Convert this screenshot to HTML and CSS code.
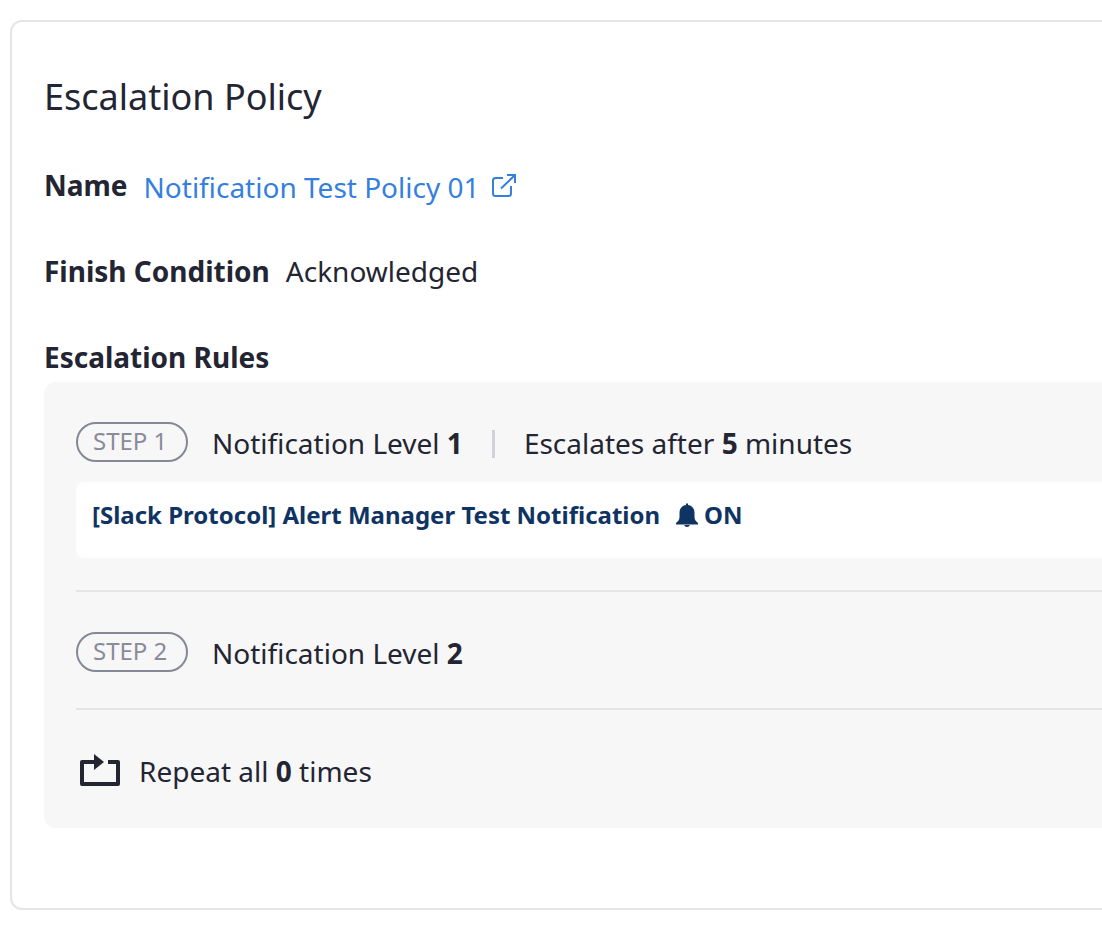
FILE: index.html
```html
<!DOCTYPE html>
<html lang="en">
<head>
<meta charset="utf-8">
<title>Escalation Policy</title>
<link rel="stylesheet" href="styles.css">
</head>
<body>
<main class="card">
  <h1 class="title">Escalation Policy</h1>
  <dl class="fields">
    <div class="field">
      <dt class="label">Name</dt>
      <dd class="value link-value"><a class="link" href="#">Notification Test Policy 01
        <svg class="external" viewBox="0 0 26 26" fill="none" stroke="currentColor" stroke-width="2" aria-hidden="true"><path d="M12 5H4.500Q2 5 2 7.500V20.500Q2 23 4.500 23H17.500Q20 23 20 20.500V13M10 15.500L24 2M16 2H24V10"/></svg></a></dd>
    </div>
    <div class="field">
      <dt class="label">Finish Condition</dt>
      <dd class="value">Acknowledged</dd>
    </div>
  </dl>
  <h2 class="label rules-title">Escalation Rules</h2>
  <section class="rules">
    <div class="step">
      <div class="step-head">
        <span class="pill">STEP 1</span>
        <span>Notification Level <b>1</b></span>
        <span class="separator"></span>
        <span>Escalates after <b>5</b> minutes</span>
      </div>
      <div class="channel">
        <span>[Slack Protocol] Alert Manager Test Notification</span>
        <svg class="bell" viewBox="0 0 22 24" fill="currentColor" aria-hidden="true"><path d="M10 2V.8Q11 -.4 12 .8V2C16.500 2.500 18.500 6 18.500 10V14C18.500 17 20 18.500 22 20V21.500H0V20C2 18.500 3.500 17 3.500 14V10C3.500 6 5.500 2.500 10 2ZM8 22H14Q13 24 11 24T8 22Z"/></svg>
        <span>ON</span>
      </div>
    </div>
    <div class="step">
      <div class="step-head">
        <span class="pill">STEP 2</span>
        <span>Notification Level <b>2</b></span>
      </div>
    </div>
    <div class="repeat">
      <svg class="repeat-icon" viewBox="0 0 40 32" aria-hidden="true"><path d="M15 8H2V30H38V8H28" fill="none" stroke="currentColor" stroke-width="4" stroke-linejoin="round"/><path d="M14 0L24 8L14 16Z" fill="currentColor"/></svg>
      <span>Repeat all <b>0</b> times</span>
    </div>
  </section>
</main>
</body>
</html>
```

FILE: styles.css
```css
* {
  box-sizing: border-box;
}

body {
  margin: 0;
  background: #fff;
  color: #232533;
  font-family: "Noto Sans", sans-serif;
  font-size: 28px;
  line-height: 42px;
}

.card {
  margin: 20px 0 20px 10px;
  padding: 50px 0 80px 32px;
  border: 2px solid #e5e5e5;
  border-right: 0;
  border-radius: 12px 0 0 12px;
}

.title {
  margin: 0 0 42px;
  font-size: 36px;
  font-weight: 400;
  line-height: 50px;
}

.fields {
  display: flex;
  flex-direction: column;
  gap: 44px;
  margin: 0 0 44px;
}

.field {
  display: flex;
  gap: 16px;
}

.label {
  margin: 0;
  font-size: 28px;
  font-weight: 700;
}

.value {
  margin: 0;
}

.link-value {
  margin-top: 2px;
  margin-bottom: -2px;
}

.link {
  display: flex;
  align-items: center;
  gap: 11px;
  color: #357fe0;
  text-decoration: none;
}

.external {
  width: 26px;
  height: 26px;
  margin-bottom: 2px;
}

.rules-title {
  margin-bottom: 4px;
}

.rules {
  padding-left: 32px;
  background: #f7f7f7;
  border-radius: 12px 0 0 12px;
}

.step {
  padding: 40px 0 34px;
  border-bottom: 2px solid #e5e5e5;
}

.step:first-child {
  padding-bottom: 32px;
}

.step-head {
  display: flex;
  align-items: flex-start;
}

.pill {
  min-width: 112px;
  margin-right: 24px;
  padding: 0 15px 2px;
  border: 2px solid #858895;
  border-radius: 20px;
  color: #898b99;
  font-size: 24px;
  line-height: 34px;
}

.separator {
  width: 3px;
  height: 28px;
  margin: 8px 29px 0;
  background: #d1d2da;
}

.channel {
  display: flex;
  align-items: center;
  margin-top: 18px;
  padding: 16px 16px 26px;
  border-radius: 8px 0 0 8px;
  background: #fff;
  color: #0f3463;
  font-size: 24px;
  font-weight: 700;
  line-height: 34px;
}

.bell {
  width: 22px;
  height: 24px;
  margin: 0 6px 0 16px;
}

.repeat {
  display: flex;
  align-items: center;
  gap: 19px;
  padding: 40px 4px 36px;
}

.repeat-icon {
  width: 40px;
  height: 32px;
  margin-bottom: 2px;
}
```
